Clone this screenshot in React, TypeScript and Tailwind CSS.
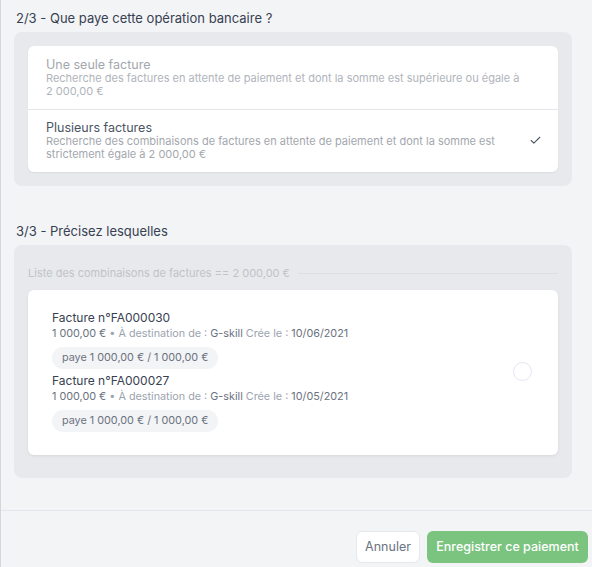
import { Check } from "lucide-react";

interface Invoice {
  id: string;
  amount: string;
  client: string;
  created: string;
  paid: string;
}

const invoices: Invoice[] = [
  { id: "FA000030", amount: "1\u00a0000,00 €", client: "G-skill", created: "10/06/2021", paid: "paye 1\u00a0000,00 € / 1\u00a0000,00 €" },
  { id: "FA000027", amount: "1\u00a0000,00 €", client: "G-skill", created: "10/05/2021", paid: "paye 1\u00a0000,00 € / 1\u00a0000,00 €" },
];

export default function App() {
  return (
    <div
      className="w-[592px] h-[567px] bg-[#f3f4f6] border-l border-[#d4d6db] flex flex-col overflow-hidden"
      style={{ fontFamily: "Inter, 'Noto Sans', sans-serif" }}
    >
      <div className="flex-1 pl-[13px] pr-[20px] pt-2">
        {/* step 2 */}
        <h2 className="text-[13px] leading-5 text-[#374151] pl-[2px]">2/3 - Que paye cette opération bancaire ?</h2>
        <div className="mt-1 bg-[#e8e9ec] rounded-lg p-[14px]">
          <div className="bg-white rounded-md shadow-[0_1px_2px_rgba(0,0,0,0.06)]">
            <div className="pl-[18px] pr-5 pt-[12px] pb-[12px] border-b border-[#e5e7eb]">
              <div className="text-[12.5px] leading-[14px] text-[#a3a7ae]">Une seule facture</div>
              <div className="text-[11px] leading-[12.5px] text-[#b0b4bb]">
                Recherche des factures en attente de paiement et dont la somme est supérieure ou égale à 2&nbsp;000,00&nbsp;€
              </div>
            </div>
            <div className="pl-[18px] pr-[16px] pt-[11px] pb-[12px] flex items-center">
              <div className="flex-1 pr-6">
                <div className="text-[12.5px] leading-[14px] text-[#4b5563]">Plusieurs factures</div>
                <div className="text-[11px] leading-[12.5px] text-[#a3a7ae]">
                  Recherche des combinaisons de factures en attente de paiement et dont la somme est strictement égale à 2&nbsp;000,00&nbsp;€
                </div>
              </div>
              <Check className="w-[13px] h-[13px] text-[#4b5563]" strokeWidth={2} />
            </div>
          </div>
        </div>

        {/* step 3 */}
        <h2 className="mt-[35px] text-[13px] leading-5 text-[#374151] pl-[2px]">3/3 - Précisez lesquelles</h2>
        <div className="mt-1 bg-[#e8e9ec] rounded-lg px-[14px] pt-[20px] pb-[23px]">
          <div className="flex items-center gap-2 mb-[9px]">
            <span className="text-[11px] leading-4 text-[#c0c3ca]">Liste des combinaisons de factures == 2&nbsp;000,00&nbsp;€</span>
            <div className="flex-1 h-px bg-[#dcdee3]" />
          </div>
          <div className="bg-white rounded-md shadow-[0_1px_3px_rgba(0,0,0,0.07)] pl-6 pr-[26px] pt-5 pb-[23px] flex items-center">
            <div className="flex-1 flex flex-col gap-1">
              {invoices.map((inv) => (
                <div key={inv.id}>
                  <div className="text-[12px] leading-4 text-[#374151]">Facture n°{inv.id}</div>
                  <div className="text-[10.8px] leading-4 text-[#9ca3af]">
                    <span className="text-[#6b7280]">{inv.amount}</span> • À destination de :{" "}
                    <span className="text-[#6b7280]">{inv.client}</span> Crée le :{" "}
                    <span className="text-[#6b7280]">{inv.created}</span>
                  </div>
                  <div className="mt-[5px] inline-flex items-center h-[22px] px-[10px] rounded-full bg-[#f3f4f6] text-[10.8px] text-[#6b7280]">
                    {inv.paid}
                  </div>
                </div>
              ))}
            </div>
            <div className="w-[19px] h-[19px] rounded-full border-[1.5px] border-[#e3e7f2]" />
          </div>
        </div>
      </div>

      {/* footer */}
      <div className="h-[57px] border-t border-[#e3e5ec] flex items-center justify-end gap-[7px] pr-[4px] pt-[20px] pb-[4px]">
        <button className="h-8 w-[64px] bg-white border border-[#e5e7eb] rounded-md text-[12.5px] text-[#6b7280]">
          Annuler
        </button>
        <button className="h-8 w-[161px] bg-[#7bc47f] rounded-md text-[12.5px] font-medium text-white">
          Enregistrer ce paiement
        </button>
      </div>
    </div>
  );
}
